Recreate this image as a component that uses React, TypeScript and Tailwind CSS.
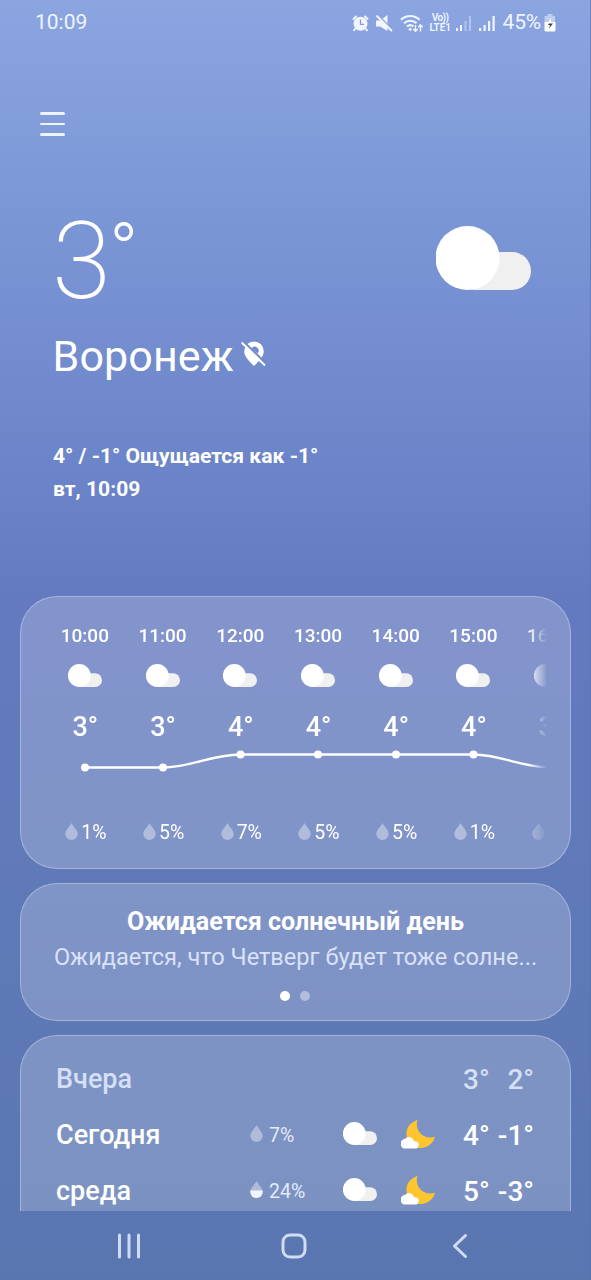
import React from "react";

const hours = [
  { time: "10:00", temp: 3, rain: 1 },
  { time: "11:00", temp: 3, rain: 5 },
  { time: "12:00", temp: 4, rain: 7 },
  { time: "13:00", temp: 4, rain: 5 },
  { time: "14:00", temp: 4, rain: 5 },
  { time: "15:00", temp: 4, rain: 1 },
  { time: "16:00", temp: 3, rain: 1 },
];

const days = [
  { name: "Вчера", high: "3°", low: "2°", past: true, rain: 0 },
  { name: "Сегодня", high: "4°", low: "-1°", past: false, rain: 7 },
  { name: "среда", high: "5°", low: "-3°", past: false, rain: 24 },
];

function Cloud({ className }: { className: string }) {
  return (
    <svg viewBox="0 0 95 64" className={className}>
      <rect x="20" y="26" width="75" height="38" rx="19" fill="#f0f0f0" />
      <path d="M31.5 0a32 32 0 0 1 0 64a32 32 0 0 1 0-64z" fill="#fff" />
    </svg>
  );
}

function Moon() {
  return (
    <svg viewBox="0 0 34 29" className="h-[29px] w-[34px]">
      <path
        d="M16.5 0C9 2.5 5 8 5.500 15C6 23 12 28.300 19.500 28C27 27.700 32.500 23 34 16.800C28 18.500 22.500 17 19 13C15.800 9.200 15 4.500 16.500 0z"
        fill="#ffc52e"
      />
      <path
        d="M4.800 28.600a4.900 4.900 0 0 1-.6-9.800a5.200 5.200 0 0 1 8.900 2.500h.9a3.650 3.650 0 0 1 0 7.300z"
        fill="#fff"
      />
    </svg>
  );
}

function Drop({ className, half = false }: { className: string; half?: boolean }) {
  return (
    <svg viewBox="0 0 13 17" className={className}>
      <path d="M6.500 0C8.500 4 12.700 7 12.700 11A6.200 6 0 0 1 .3 11C.3 7 4.500 4 6.500 0z" fill="#fff" fillOpacity="0.38" />
      {half && <path d="M.3 9.600H12.700V11A6.200 6 0 0 1 .3 11z" fill="#f1f4fc" />}
    </svg>
  );
}

function StatusBar() {
  return (
    <div className="flex h-[45px] items-center pr-[34px] pl-[35px] text-[#f0f5ff]">
      <span className="text-[21px] leading-none">10:09</span>
      <div className="ml-auto flex items-center">
        <svg viewBox="0 0 17 17" className="mt-px h-[17px] w-[17px]">
          <path d="M1 4.500L4.500 1M12.500 1L16 4.500M3.500 13.500L1.500 16M13.500 13.500L15.500 16" stroke="currentColor" strokeWidth="2" />
          <circle cx="8.500" cy="8.800" r="7" fill="currentColor" />
          <path d="M8.500 4.500V9.300H12" fill="none" stroke="#849ed9" strokeWidth="1.300" />
        </svg>
        <svg viewBox="0 0 17 17" className="mt-px ml-[7px] h-[17px] w-[17px]">
          <path d="M0 5.500H4L11.500 0V16L4 11.500H0z" fill="currentColor" />
          <path d="M1.500 0L17.500 16" stroke="#849ed9" strokeWidth="2" />
          <path d="M0.500 0.500L16 16" stroke="currentColor" strokeWidth="2" />
        </svg>
        <svg viewBox="0 0 24 19" className="mt-px ml-[7px] h-[19px] w-6" fill="none" stroke="currentColor" strokeWidth="2.100">
          <path d="M1 5.800A13 13 0 0 1 19.500 5.800M4 9.300A9 9 0 0 1 16.500 9.300M7 12.500A5 5 0 0 1 13.400 12.500" />
          <circle cx="10.200" cy="15.300" r="1.500" fill="currentColor" stroke="none" />
          <path d="M15.500 11V17M13.300 15L15.500 17.300L17.700 15M20.500 17.500V11M18.300 13.300L20.500 10.800L22.700 13.300" strokeWidth="1.400" />
        </svg>
        <div className="ml-[5px] flex w-[23px] flex-col items-center text-[10px] leading-[10px] font-semibold">
          <span className="tracking-[-0.6px]">Vo))</span>
          <span className="tracking-[-0.1px]">LTE1</span>
        </div>
        <svg viewBox="0 0 16 16" className="mt-px ml-1 h-4 w-4" fill="currentColor">
          <path d="M0 13h2v3H0zM4 10h2v6H4z" />
          <path d="M8.500 6h2v10h-2zM13 1h2v15h-2z" opacity=".4" />
        </svg>
        <svg viewBox="0 0 16 16" className="mt-px ml-[7px] h-4 w-4" fill="currentColor">
          <path d="M0 13h2.200v3H0zM4.500 10h2.200v6H4.500zM9 6h2.200v10H9zM13.500 1h2.200v15h-2.200z" />
        </svg>
        <span className="ml-2 text-[21px] leading-none tracking-[-0.2px]">45%</span>
        <svg viewBox="0 0 12 18" className="mt-px ml-[3px] h-[18px] w-3">
          <path d="M3.500 0H8.500V2H11V8H.500V2H3.500z" fill="#fff" opacity=".45" />
          <path d="M.500 8H11.500V16Q11.500 17.500 10 17.500H2Q.500 17.500 .500 16z" fill="#fff" />
          <path d="M7 4L3 9.500H7z" fill="#fff" />
          <path d="M5 9.500H9L5 14.500L6 11H4z" fill="#37405a" />
        </svg>
      </div>
    </div>
  );
}

function Hourly() {
  return (
    <section className="h-[273px] rounded-[37px] border border-white/30 bg-white/20 pl-[25px]">
      <div className="h-full w-[500px] overflow-hidden [mask-image:linear-gradient(to_right,black_482px,transparent_501px)]">
        <div className="grid w-[544px] grid-cols-1 grid-rows-[271px] text-white">
          <div className="col-start-1 row-start-1 grid grid-cols-7">
            {hours.map((h) => (
              <div key={h.time} className="flex flex-col items-center">
                <span className="mt-[26px] text-[19px] leading-[26px] font-medium">{h.time}</span>
                <Cloud className="mt-[15px] h-[23px] w-[34px]" />
                <span className="mt-[24px] pl-px text-[27px] leading-[32px] font-medium">{h.temp}°</span>
                <div className="mt-[77px] flex items-center gap-[3px] pl-[2px]">
                  <Drop className="mt-[-3px] h-[17px] w-[13px]" />
                  <span className="text-[19.500px] leading-[26px]">{h.rain}%</span>
                </div>
              </div>
            ))}
          </div>
          <svg viewBox="0 0 544 26" className="col-start-1 row-start-1 mt-[150px] h-[26px] w-[544px]" fill="none" stroke="#fff" strokeWidth="2.300">
            <path d="M39 20.500H117C145 20.500 165 7.500 194.500 7.500H427.500C455 7.500 475 20.500 505 20.500" />
            {[39, 117, 194.5, 272, 350, 427.5].map((x, i) => (
              <circle key={x} cx={x} cy={i < 2 ? 20.5 : 7.5} r="4" fill="#fff" stroke="none" />
            ))}
          </svg>
        </div>
      </div>
    </section>
  );
}

function Daily() {
  return (
    <section className="h-[176px] overflow-hidden rounded-t-[37px] border border-b-0 border-white/30 bg-white/20 pt-[15px] pr-9 pl-[35px]">
      {days.map((d) => (
        <div key={d.name} className={`flex h-14 items-center ${d.past ? "text-[#d5dff5]" : "text-white"}`}>
          <span className="mt-[2px] w-[194px] text-[27px] leading-none font-medium">{d.name}</span>
          {!d.past && (
            <>
              <div className="flex w-[93px] items-center gap-[6px]">
                <Drop className="mt-[-2px] h-[17px] w-[13px]" half={d.rain > 20} />
                <span className="pt-[2px] text-[19.500px] leading-none text-[#e3eafa]">{d.rain}%</span>
              </div>
              <Cloud className="mt-[-3px] h-[23px] w-[34px]" />
              <div className="mt-[-1px] ml-[24px]"><Moon /></div>
            </>
          )}
          <div className="mt-[2px] ml-auto flex text-[28px] leading-none font-medium">
            <span className="w-[27px]">{d.high}</span>
            <span className="w-11 text-right">{d.low}</span>
          </div>
        </div>
      ))}
    </section>
  );
}

export default function App() {
  return (
    <main className="flex h-[1280px] w-[591px] flex-col overflow-hidden border-r border-[#5870b0]/60 bg-[linear-gradient(to_bottom,#8ba5e1_0px,#7b96d5_220px,#6e87cb_430px,#647ac0_600px,#607ab9_870px,#5a76b1_1280px)] bg-origin-border font-[Roboto,sans-serif] whitespace-nowrap text-white">
      <StatusBar />
      <button aria-label="Меню" className="mt-[67px] ml-[40px] flex w-[25px] flex-col gap-2">
        <span className="h-[2.500px] w-full rounded bg-[#edf4ff]" />
        <span className="h-[2.500px] w-full rounded bg-[#edf4ff]" />
        <span className="h-[2.500px] w-full rounded bg-[#edf4ff]" />
      </button>
      <header className="mt-[64px] flex h-[120px] items-start justify-between pr-[59px] pl-[52px]">
        <div className="flex items-start">
          <span className="mt-[2px] text-[107px] leading-[120px] font-extralight">3</span>
          <span className="mt-[9px] ml-[-2px] text-[78px] leading-[86px] font-light">°</span>
        </div>
        <Cloud className="mt-[26px] h-16 w-[95px]" />
      </header>
      <div className="mt-[11px] flex h-[50px] items-center pl-[52.500px]">
        <h1 className="text-[43px] leading-[50px] tracking-[0.1px]">Воронеж</h1>
        <svg viewBox="0 0 25 26" className="mt-[-4px] ml-[7px] h-[26px] w-[25px]">
          <path d="M13 .500A9.800 9.800 0 0 1 22.800 10.300C22.800 16 17 21 13 25C9 21 3.200 16 3.200 10.300A9.800 9.800 0 0 1 13 .500z" fill="#fff" />
          <path d="M10.500 7A3.500 3.500 0 0 1 16.500 12.500z" fill="#7189cb" />
          <path d="M2 0L26 23.500" stroke="#7189cb" strokeWidth="2" />
          <path d="M.700 1.500L24 24.500" stroke="#fff" strokeWidth="2" />
        </svg>
      </div>
      <div className="mt-[58px] h-[66px] pl-[53px] text-[21.100px] leading-[33px] font-bold">
        <p>4° / -1° Ощущается как -1°</p>
        <p>вт, 10:09</p>
      </div>
      <div className="mt-[91px] flex flex-col gap-[14px] pr-[19px] pl-5">
        <Hourly />
        <section className="flex h-[138px] flex-col items-center rounded-[37px] border border-white/30 bg-white/20 pt-[20px]">
          <h2 className="text-[25.100px] leading-9 font-bold">Ожидается солнечный день</h2>
          <p className="mt-[-1px] text-[23.600px] leading-9 text-[#d9e2f8]">Ожидается, что Четверг будет тоже солне...</p>
          <div className="mt-[16px] flex gap-[10px] pr-px">
            <span className="size-[10px] rounded-full bg-white" />
            <span className="size-[10px] rounded-full bg-white/40" />
          </div>
        </section>
        <Daily />
      </div>
      <nav className="flex h-[69px] items-center pt-[2px] text-[#d0dcf5]">
        <svg viewBox="0 0 24 26" className="ml-[117px] h-[26px] w-6" stroke="currentColor" strokeWidth="3" strokeLinecap="round">
          <path d="M2.500 2V24M12 2V24M21.500 2V24" />
        </svg>
        <svg viewBox="0 0 26 26" className="ml-[140px] h-[26px] w-[26px]" fill="none" stroke="currentColor" strokeWidth="3">
          <rect x="2" y="2" width="22" height="22" rx="7" />
        </svg>
        <svg viewBox="0 0 16 26" className="ml-[145px] h-[26px] w-4" fill="none" stroke="currentColor" strokeWidth="3" strokeLinecap="round" strokeLinejoin="round">
          <path d="M13.500 2.500L2.500 13L13.500 23.500" />
        </svg>
      </nav>
    </main>
  );
}
